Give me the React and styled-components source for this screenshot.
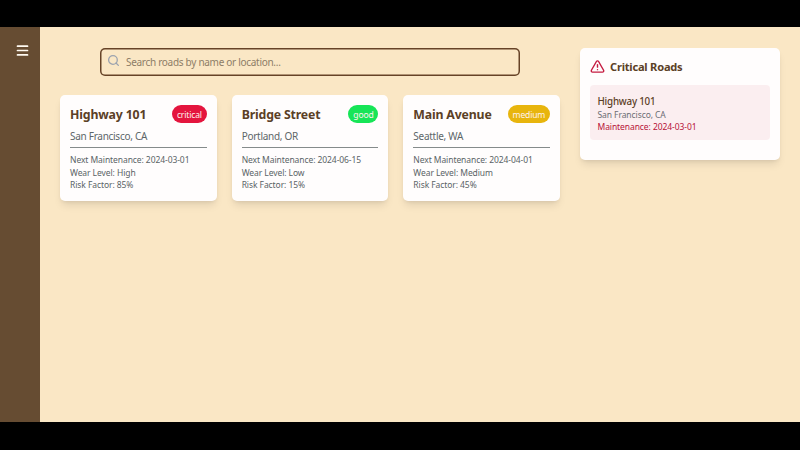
import React from "react";
import styled, { createGlobalStyle } from "styled-components";
import { Menu, Search, TriangleAlert } from "lucide-react";

const GlobalStyle = createGlobalStyle`
  * { box-sizing: border-box; }
  body { margin: 0; background: #000; font-family: "Noto Sans", "Open Sans", sans-serif; }
  h2, h3, p { margin: 0; }
`;

const Frame = styled.div`
  width: 800px;
  height: 450px;
  padding: 27px 0 27.6px;
  background: #000;
  overflow: hidden;
`;

const Screen = styled.div`
  display: flex;
  height: 395.4px;
  background: #fae7c5;
`;

const Sidebar = styled.nav`
  width: 40px;
  flex: none;
  padding: 16px 0 0 15px;
  background: #664c32;
`;

const MenuButton = styled.button`
  display: block;
  padding: 0;
  border: 0;
  background: none;
  color: #fffaf2;
  svg { display: block; }
`;

const Content = styled.main`
  display: flex;
  align-items: flex-start;
  gap: 20px;
  flex: 1;
  padding: 20.5px 20px 0;
`;

const Roads = styled.section`
  width: 500px;
`;

const SearchBox = styled.label`
  display: flex;
  align-items: center;
  gap: 6px;
  width: 420px;
  height: 28px;
  margin: 0 auto 19.7px;
  padding: 0 8px 0 7px;
  border-radius: 5px;
  box-shadow: inset 0 0 0 1.5px #664327;
  svg { flex: none; position: relative; top: -1.5px; }
`;

const SearchInput = styled.input`
  flex: 1;
  padding: 0;
  border: 0;
  outline: 0;
  background: none;
  font: 10px "Noto Sans", sans-serif;
  letter-spacing: -0.29px;
  &::placeholder { color: #8d7d67; opacity: 1; }
`;

const Grid = styled.div`
  display: grid;
  grid-template-columns: repeat(3, 1fr);
  gap: 15px;
`;

const Card = styled.article`
  height: 105.5px;
  padding: 10px;
  border-radius: 5px;
  background: #fffdfd;
  box-shadow: 0 6px 9px -2px rgba(0, 0, 0, 0.1), 0 2px 4px -2px rgba(0, 0, 0, 0.1);
`;

const CardHeader = styled.div`
  display: flex;
  justify-content: space-between;
  height: 18.3px;
  line-height: 20px;
`;

const RoadName = styled.h2`
  font-size: 12.3px;
  font-weight: 700;
  letter-spacing: -0.16px;
  color: #5b4026;
  white-space: nowrap;
`;

const badgeColors = { critical: "#e4153e", good: "#17e557", medium: "#e8b50d" };

const Badge = styled.span`
  padding: 0 4.8px;
  border-radius: 9px;
  background: ${({ $status }) => badgeColors[$status]};
  color: #fff2ee;
  font-size: 8.6px;
  letter-spacing: -0.18px;
`;

const Location = styled.p`
  height: 25px;
  padding-top: 5.7px;
  border-bottom: 1px solid #858b8b;
  margin-bottom: 6px;
  color: #5d6669;
  font-size: 10px;
  line-height: 14px;
  letter-spacing: -0.28px;
`;

const Detail = styled.p`
  color: #5a6366;
  font-size: 8.5px;
  line-height: 12.5px;
  letter-spacing: -0.08px;
  white-space: nowrap;
`;

const Panel = styled(Card).attrs({ as: "aside" })`
  width: 200px;
  height: 112.8px;
`;

const PanelTitle = styled.h2`
  display: flex;
  align-items: center;
  gap: 5px;
  height: 18px;
  margin-bottom: 9.3px;
  color: #5b4026;
  font-size: 11.1px;
  font-weight: 700;
  letter-spacing: -0.22px;
`;

const Alert = styled.div`
  height: 55px;
  padding: 10px 7.5px;
  border-radius: 4px;
  background: #fbeef0;
`;

const AlertName = styled.h3`
  color: #5b4026;
  font-size: 9.8px;
  font-weight: 500;
  line-height: 13px;
  letter-spacing: -0.22px;
  margin-bottom: 1px;
`;

const AlertText = styled(Detail)`
  color: ${({ $danger }) => ($danger ? "#b71238" : "#6b6d73")};
`;

const roads = [
  { name: "Highway 101", place: "San Francisco, CA", status: "critical", date: "2024-03-01", wear: "High", risk: 85 },
  { name: "Bridge Street", place: "Portland, OR", status: "good", date: "2024-06-15", wear: "Low", risk: 15 },
  { name: "Main Avenue", place: "Seattle, WA", status: "medium", date: "2024-04-01", wear: "Medium", risk: 45 },
];

function RoadCard({ road }) {
  return (
    <Card>
      <CardHeader>
        <RoadName>{road.name}</RoadName>
        <Badge $status={road.status}>{road.status}</Badge>
      </CardHeader>
      <Location>{road.place}</Location>
      <Detail>Next Maintenance: {road.date}</Detail>
      <Detail>Wear Level: {road.wear}</Detail>
      <Detail>Risk Factor: {road.risk}%</Detail>
    </Card>
  );
}

export default function App() {
  const critical = roads.filter((road) => road.status === "critical");
  return (
    <>
      <GlobalStyle />
      <Frame>
        <Screen>
          <Sidebar>
            <MenuButton aria-label="Menu"><Menu size={15} strokeWidth={2.7} /></MenuButton>
          </Sidebar>
          <Content>
            <Roads>
              <SearchBox>
                <Search size={13} color="#9ca3af" strokeWidth={2.4} />
                <SearchInput placeholder="Search roads by name or location..." />
              </SearchBox>
              <Grid>
                {roads.map((road) => <RoadCard key={road.name} road={road} />)}
              </Grid>
            </Roads>
            <Panel>
              <PanelTitle><TriangleAlert size={15} color="#c51b40" strokeWidth={2.3} />Critical Roads</PanelTitle>
              {critical.map((road) => (
                <Alert key={road.name}>
                  <AlertName>{road.name}</AlertName>
                  <AlertText>{road.place}</AlertText>
                  <AlertText $danger>Maintenance: {road.date}</AlertText>
                </Alert>
              ))}
            </Panel>
          </Content>
        </Screen>
      </Frame>
    </>
  );
}
